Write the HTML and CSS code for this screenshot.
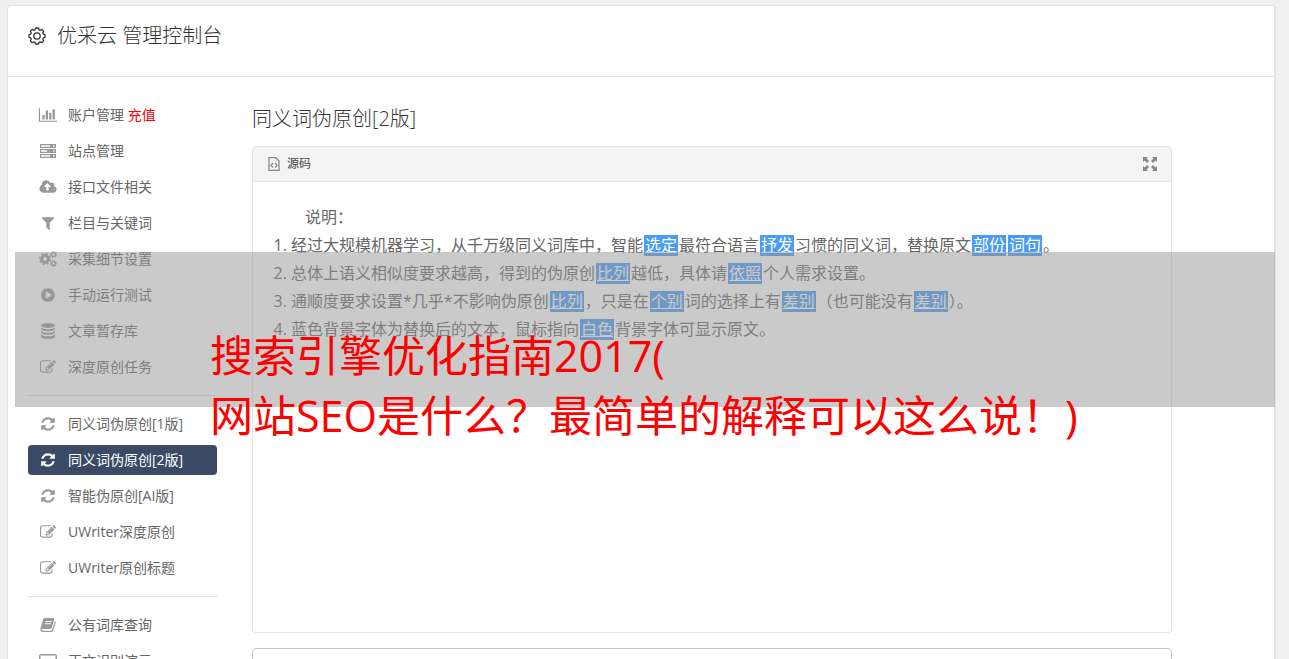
FILE: index.html
```html
<!DOCTYPE html>
<html lang="zh-CN">
<head>
<meta charset="utf-8">
<title>优采云 管理控制台</title>
<link rel="stylesheet" href="styles.css">
</head>
<body>
<svg class="sprite" aria-hidden="true">
  <symbol id="chart" viewBox="0 0 2048 1792"><path d="M640 896v512h-256v-512h256zm384-512v1024h-256v-1024h256zm1024 1152v128h-2048v-1536h128v1408h1920zm-640-896v768h-256v-768h256zm384-384v1152h-256v-1152h256z"/></symbol>
  <symbol id="server" viewBox="0 0 16 16"><path fill-rule="evenodd" d="M0 1h16v4H0zM1 2.300v1.400h9V2.300zM13 2.300v1.400h1.500V2.300zM0 6h16v4H0zM1 7.300v1.400h6V7.300zM13 7.300v1.400h1.500V7.300zM0 11h16v4H0zM1 12.300v1.400h9v-1.400zM13 12.300v1.400h1.500v-1.400z"/></symbol>
  <symbol id="cloud" viewBox="0 0 1920 1792"><path d="M1280 864q0-14-9-23l-352-352q-9-9-23-9t-23 9l-351 351q-10 12-10 24 0 14 9 23t23 9h224v352q0 13 9.500 22.500t22.500 9.500h192q13 0 22.500-9.500t9.500-22.500v-352h224q13 0 22.500-9.500t9.500-22.500zm640 288q0 159-112.500 271.500t-271.500 112.500h-1088q-185 0-316.500-131.500t-131.500-316.500q0-130 70-240t188-165q-2-30-2-43 0-212 150-362t362-150q156 0 285.500 87t188.500 231q71-62 166-62 106 0 181 75t75 181q0 76-41 138 130 31 213.500 135.500t83.500 238.500z"/></symbol>
  <symbol id="filter" viewBox="0 0 1792 1792"><path d="M1595 295q17 41-14 70l-493 493v742q0 42-39 59-13 5-25 5-27 0-45-19l-256-256q-19-19-19-45v-486l-493-493q-31-29-14-70 17-39 59-39h1280q42 0 59 39z"/></symbol>
  <symbol id="cogs" viewBox="0 0 18 16"><g fill="none" stroke="currentColor"><circle cx="6" cy="8" r="3.400" stroke-width="2.600"/><circle cx="6" cy="8" r="5.300" stroke-width="1.600" stroke-dasharray="2.160 2"/><circle cx="14.500" cy="3.500" r="1.900" stroke-width="1.300"/><circle cx="14.500" cy="3.500" r="2.900" stroke-width="1" stroke-dasharray="1.300 .977"/><circle cx="14.500" cy="12.500" r="1.900" stroke-width="1.300"/><circle cx="14.500" cy="12.500" r="2.900" stroke-width="1" stroke-dasharray="1.300 .977"/></g></symbol>
  <symbol id="play" viewBox="0 0 1792 1792"><path d="M896 128q209 0 385.500 103t279.500 279.500 103 385.500-103 385.500-279.500 279.500-385.500 103-385.500-103-279.500-279.500-103-385.500 103-385.500 279.500-279.500 385.500-103zm384 823q32-18 32-55t-32-55l-544-320q-31-19-64-1-32 19-32 56v640q0 37 32 56 16 8 32 8 17 0 32-9z"/></symbol>
  <symbol id="database" viewBox="0 0 16 16"><ellipse cx="8" cy="2.500" rx="7" ry="2.500"/><path d="M1 4.200q2 2 7 2t7-2v1.600q-1 2.500-7 2.500T1 5.800zM1 7.700q2 2 7 2t7-2v1.600q-1 2.500-7 2.500T1 9.300zM1 11.200q2 2 7 2t7-2v2.200Q14 16 8 16T1 13.400z"/></symbol>
  <symbol id="edit" viewBox="0 0 1792 1792"><path d="M888 1184l116-116-152-152-116 116v56h96v96h56zm440-720q-16-16-33 1l-350 350q-17 17-1 33t33-1l350-350q17-17 1-33zm80 594v190q0 119-84.500 203.500t-203.500 84.500h-832q-119 0-203.500-84.500t-84.500-203.500v-832q0-119 84.500-203.500t203.500-84.500h832q63 0 117 25 15 7 18 23 3 17-9 29l-49 49q-14 14-32 8-23-6-45-6h-832q-66 0-113 47t-47 113v832q0 66 47 113t113 47h832q66 0 113-47t47-113v-126q0-13 9-22l64-64q15-15 35-7t20 29zm-96-738l288 288-672 672h-288v-288zm444 132l-92 92-288-288 92-92q28-28 68-28t68 28l152 152q28 28 28 68t-28 68z"/></symbol>
  <symbol id="refresh" viewBox="0 0 1792 1792"><path d="M1639 1056q0 5-1 7-64 268-268 434.500t-478 166.500q-146 0-282.500-55t-243.500-157l-129 129q-19 19-45 19t-45-19-19-45v-448q0-26 19-45t45-19h448q26 0 45 19t19 45-19 45l-137 137q71 66 161 102t187 36q134 0 250-65t186-179q11-17 53-117 8-23 30-23h192q13 0 22.500 9.500t9.500 22.500zm25-800v448q0 26-19 45t-45 19h-448q-26 0-45-19t-19-45 19-45l138-138q-148-137-349-137-134 0-250 65t-186 179q-11 17-53 117-8 23-30 23h-199q-13 0-22.500-9.500t-9.500-22.500v-7q65-268 270-434.500t480-166.500q146 0 284 55.500t245 156.500l130-129q19-19 45-19t45 19 19 45z"/></symbol>
  <symbol id="book" viewBox="0 0 16 16"><path fill-rule="evenodd" d="M4.500 1H13q1.500.2 1.200 1.600L11.600 11q-.4 1-1.500 1H2.600q-1 .2-.8 1 .2.700 1.200.7h8q.8 0 1.100-.9L15 4q1 .5.700 1.600L13 13.800q-.5 1.200-1.800 1.200H2.500Q.2 14.600.3 12.500L3 2.500Q3.500 1.200 4.500 1zM5.600 4l-.3 1h6l.3-1zM5 6.300l-.3 1h6l.3-1z"/></symbol>
  <symbol id="laptop" viewBox="0 0 18 16"><path fill-rule="evenodd" d="M2 1h14q2 0 2 2v10H0V3q0-2 2-2zm-.5 1.500v9h15v-9z"/></symbol>
  <symbol id="gear" viewBox="0 0 18 18"><g fill="none" stroke="currentColor" stroke-width="1.300" stroke-linejoin="round"><path d="M7.500 1h3l.5 1.800 1.200.5 1.600-.9 1.900 1.900-.9 1.600.5 1.200 1.700.5v2.800l-1.700.5-.5 1.300.9 1.600-1.900 1.900-1.600-.9-1.200.5-.5 1.700h-3L7 15.300l-1.200-.5-1.600.9-1.900-1.900.9-1.600-.5-1.300L1 10.400V7.600l1.700-.5.500-1.200-.9-1.600 1.900-1.900 1.600.9L7 2.800z"/><circle cx="9" cy="9" r="3.200"/></g></symbol>
  <symbol id="source" viewBox="0 0 12 14"><g fill="none" stroke="currentColor" stroke-width="1.300"><path d="M1 .7h6.500L11 4v9.300H1z"/><path d="M5 6 3 8.300l2 2.200M7 6l2 2.300-2 2.200"/></g></symbol>
  <symbol id="expand" viewBox="0 0 14 14"><path d="M0 0h5L3.600 1.600 6 4 4 6 1.600 3.600 0 5zM14 0v5l-1.600-1.400L10 6 8 4l2.400-2.400L9 0zM0 14V9l1.600 1.400L4 8l2 2-2.400 2.400L5 14zM14 14H9l1.400-1.600L8 10l2-2 2.400 2.400L14 9z"/></symbol>
</svg>

<div class="panel">
  <header class="panel-head">
    <svg class="gear"><use href="#gear"/></svg>
    <h1>优采云 管理控制台</h1>
  </header>
  <div class="panel-body">
    <nav class="menu">
      <ul>
        <li><a href="#"><svg><use href="#chart"/></svg><span>账户管理 <em>充值</em></span></a></li>
        <li><a href="#"><svg><use href="#server"/></svg><span>站点管理</span></a></li>
        <li><a href="#"><svg><use href="#cloud"/></svg><span>接口文件相关</span></a></li>
        <li><a href="#"><svg><use href="#filter"/></svg><span>栏目与关键词</span></a></li>
        <li><a href="#"><svg><use href="#cogs"/></svg><span>采集细节设置</span></a></li>
        <li><a href="#"><svg><use href="#play"/></svg><span>手动运行测试</span></a></li>
        <li><a href="#"><svg><use href="#database"/></svg><span>文章暂存库</span></a></li>
        <li><a href="#"><svg><use href="#edit"/></svg><span>深度原创任务</span></a></li>
      </ul>
      <ul>
        <li><a href="#"><svg><use href="#refresh"/></svg><span>同义词伪原创[1版]</span></a></li>
        <li><a href="#" class="active" aria-current="page"><svg><use href="#refresh"/></svg><span>同义词伪原创[2版]</span></a></li>
        <li><a href="#"><svg><use href="#refresh"/></svg><span>智能伪原创[AI版]</span></a></li>
        <li><a href="#"><svg><use href="#edit"/></svg><span>UWriter深度原创</span></a></li>
        <li><a href="#"><svg><use href="#edit"/></svg><span>UWriter原创标题</span></a></li>
      </ul>
      <ul>
        <li><a href="#"><svg><use href="#book"/></svg><span>公有词库查询</span></a></li>
        <li><a href="#"><svg><use href="#laptop"/></svg><span>正文识别演示</span></a></li>
      </ul>
    </nav>
    <main class="content">
      <h2>同义词伪原创[2版]</h2>
      <section class="editor">
        <div class="toolbar">
          <button type="button"><svg class="source"><use href="#source"/></svg>源码</button>
          <button type="button" aria-label="全屏"><svg class="expand"><use href="#expand"/></svg></button>
        </div>
        <div class="document">
          <p>说明：</p>
          <ol>
            <li>经过大规模机器学习，从千万级同义词库中，智能<mark>选定</mark>最符合语言<mark>抒发</mark>习惯的同义词，替换原文<mark>部份</mark><mark>词句</mark>。</li>
            <li>总体上语义相似度要求越高，得到的伪原创<mark>比列</mark>越低，具体请<mark>依照</mark>个人需求设置。</li>
            <li>通顺度要求设置*几乎*不影响伪原创<mark>比列</mark>，只是在<mark>个别</mark>词的选择上有<mark>差别</mark>（也可能没有<mark>差别</mark>）。</li>
            <li>蓝色背景字体为替换后的文本，鼠标指向<mark>白色</mark>背景字体可显示原文。</li>
          </ol>
        </div>
      </section>
      <textarea class="result" aria-label="结果"></textarea>
    </main>
  </div>
</div>
<div class="caption">搜索引擎优化指南2017(<br>网站SEO是什么？最简单的解释可以这么说！)</div>
</body>
</html>
```
FILE: styles.css
```css
* { box-sizing: border-box; }
body {
  margin: 0;
  padding: 5px 13px 0 7px;
  height: 100vh;
  overflow: hidden;
  position: relative;
  background: #f0f0f0;
  color: #666;
  font: 14px/20px "Open Sans", "Noto Sans CJK SC", sans-serif;
}
.sprite { position: absolute; width: 0; height: 0; }
svg { fill: currentColor; flex: none; }
h1, h2, p, ol, ul { margin: 0; padding: 0; }
h1, h2 { font-size: 20px; line-height: 28px; font-weight: 300; color: #333; }
.panel {
  min-height: 100vh;
  background: #fff;
  border: 1px solid #e4e4e4;
  border-right-width: 2px;
  border-radius: 4px;
}
.panel-head {
  display: flex;
  align-items: center;
  gap: 11px;
  padding: 16px 20px 26px;
  border-bottom: 1px solid #e4e4e4;
}
.gear { width: 18px; height: 18px; color: #333; }
.panel-body {
  display: grid;
  grid-template-columns: 189px 1fr;
  gap: 35px;
  padding: 23px 102px 0 20px;
}
.menu ul { list-style: none; display: grid; gap: 6px; }
.menu ul + ul {
  margin-top: 13px;
  padding-top: 13px;
  border-top: 1px solid #ddd;
}
.menu a {
  display: flex;
  align-items: center;
  gap: 10px;
  height: 30px;
  padding-left: 10px;
  border-radius: 4px;
  color: #666;
  text-decoration: none;
  white-space: nowrap;
}
.menu svg { width: 20px; height: 16px; color: #999; }
.menu em { color: #f00; font-style: normal; }
.menu .active { background: #3a4a66; color: #fff; }
.menu .active svg { color: #fff; }
.content { padding-top: 5px; min-width: 0; }
.editor {
  margin-top: 13px;
  min-height: 487px;
  border: 1px solid #e4e4e4;
  border-radius: 4px;
}
.toolbar {
  display: flex;
  justify-content: space-between;
  align-items: center;
  height: 35px;
  padding: 0 14px 0 15px;
  background: #f4f4f4;
  border-bottom: 1px solid #e4e4e4;
  border-radius: 3px 3px 0 0;
}
.toolbar button {
  display: flex;
  align-items: center;
  gap: 7px;
  padding: 0;
  border: 0;
  background: none;
  color: #444;
  font: inherit;
  font-size: 12px;
}
.source { width: 12px; height: 14px; color: #888; }
.expand { width: 14px; height: 14px; color: #888; }
.document { padding: 21px 20px; font-size: 16px; line-height: 28px; }
.document p { padding-left: 32px; }
.document ol { padding-left: 18px; }
mark {
  margin: 0 1px;
  padding: 0 1px;
  background: linear-gradient(#499cf2, #499cf2) center / 100% 21px no-repeat;
  color: #fff;
  text-decoration: underline;
}
.result {
  display: block;
  width: 100%;
  height: 80px;
  margin-top: 15px;
  border: 1px solid #c4c4c4;
  border-radius: 4px;
  resize: none;
}
.caption {
  position: absolute;
  top: 252px;
  left: 15px;
  right: 14px;
  height: 155px;
  padding: 74px 0 0 195px;
  background: rgba(150, 150, 150, .5);
  color: #f00;
  font-size: 43px;
  line-height: 60px;
  white-space: nowrap;
}
```
